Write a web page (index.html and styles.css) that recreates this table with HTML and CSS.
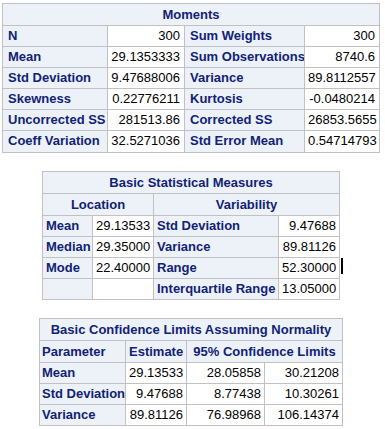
FILE: index.html
```html
<!DOCTYPE html>
<html lang="en">
<head>
  <meta charset="UTF-8">
  <title>Univariate Procedure</title>
  <link rel="stylesheet" href="styles.css">
</head>
<body>

<div class="output">

  <table class="table moments">
    <colgroup><col class="c1"><col class="c2"><col class="c3"><col class="c4"></colgroup>
    <tr><th class="title" colspan="4">Moments</th></tr>
    <tr><th class="row">N</th><td>300</td><th class="row">Sum Weights</th><td>300</td></tr>
    <tr><th class="row">Mean</th><td>29.1353333</td><th class="row">Sum Observations</th><td>8740.6</td></tr>
    <tr><th class="row">Std Deviation</th><td>9.47688006</td><th class="row">Variance</th><td>89.8112557</td></tr>
    <tr><th class="row">Skewness</th><td>0.22776211</td><th class="row">Kurtosis</th><td>-0.0480214</td></tr>
    <tr><th class="row">Uncorrected SS</th><td>281513.86</td><th class="row">Corrected SS</th><td>26853.5655</td></tr>
    <tr><th class="row">Coeff Variation</th><td>32.5271036</td><th class="row">Std Error Mean</th><td>0.54714793</td></tr>
  </table>

  <div class="table-wrap">
    <table class="table basic">
      <colgroup><col class="c1"><col class="c2"><col class="c3"><col class="c4"></colgroup>
      <tr><th class="title" colspan="4">Basic Statistical Measures</th></tr>
      <tr><th class="title" colspan="2">Location</th><th class="title" colspan="2">Variability</th></tr>
      <tr><th class="row">Mean</th><td>29.13533</td><th class="row">Std Deviation</th><td>9.47688</td></tr>
      <tr><th class="row">Median</th><td>29.35000</td><th class="row">Variance</th><td>89.81126</td></tr>
      <tr><th class="row">Mode</th><td>22.40000</td><th class="row">Range</th><td>52.30000</td></tr>
      <tr><th class="row"></th><td></td><th class="row">Interquartile Range</th><td>13.05000</td></tr>
    </table>
    <span class="caret"></span>
  </div>

  <table class="table limits">
    <colgroup><col class="c1"><col class="c2"><col class="c3"><col class="c4"></colgroup>
    <tr><th class="title" colspan="4">Basic Confidence Limits Assuming Normality</th></tr>
    <tr><th class="row">Parameter</th><th class="title">Estimate</th><th class="title" colspan="2">95% Confidence Limits</th></tr>
    <tr><th class="row">Mean</th><td>29.13533</td><td>28.05858</td><td>30.21208</td></tr>
    <tr><th class="row">Std Deviation</th><td>9.47688</td><td>8.77438</td><td>10.30261</td></tr>
    <tr><th class="row">Variance</th><td>89.81126</td><td>76.98968</td><td>106.14374</td></tr>
  </table>

</div>

</body>
</html>
```

FILE: styles.css
```css
body {
  margin: 0;
  padding: 0;
  background: #ffffff;
  font-family: "Liberation Sans", Arial, sans-serif;
  font-size: 13px;
}

.output {
  width: 382px;
  padding-top: 3px;
  display: flex;
  flex-direction: column;
  align-items: center;
  gap: 18px;
}

/* SAS style tables */
.table {
  border-collapse: collapse;
  border: 1px solid #c1c1c1;
  table-layout: fixed;
}

.table th,
.table td {
  border: 1px solid #c1c1c1;
  padding: 3px 3px 3px 3px;
  line-height: 14px;
  height: 14px;
  white-space: nowrap;
  overflow: hidden;
}

.table th {
  background: #edf2f9;
  color: #112277;
  font-weight: bold;
}

.table th.title {
  text-align: center;
  padding-top: 4px;
}

.table th.row {
  text-align: left;
}

.table td {
  background: #ffffff;
  color: #000000;
  text-align: right;
}

/* Moments */
.moments {
  width: 378px;
}

.moments .c1 { width: 105px; }
.moments .c2 { width: 77px; }
.moments .c3 { width: 120px; }
.moments .c4 { width: 75px; }

.moments th.row {
  padding-left: 5px;
}

.moments td {
  padding-right: 4px;
}

.moments tr:last-child th,
.moments tr:last-child td {
  padding-bottom: 4px;
}

/* Basic Statistical Measures */
.basic {
  width: 298px;
}

.basic .c1 { width: 50px; }
.basic .c2 { width: 61px; }
.basic .c3 { width: 125px; }
.basic .c4 { width: 61px; }

.table-wrap {
  position: relative;
}

/* text cursor left in the screenshot */
.caret {
  position: absolute;
  right: -3px;
  top: 87px;
  width: 2px;
  height: 16px;
  background: #000000;
}

/* Confidence limits */
.limits {
  width: 304px;
}

.limits .c1 { width: 86px; }
.limits .c2 { width: 61px; }
.limits .c3 { width: 78px; }
.limits .c4 { width: 78px; }

.limits th.row {
  padding-left: 2px;
}
```
